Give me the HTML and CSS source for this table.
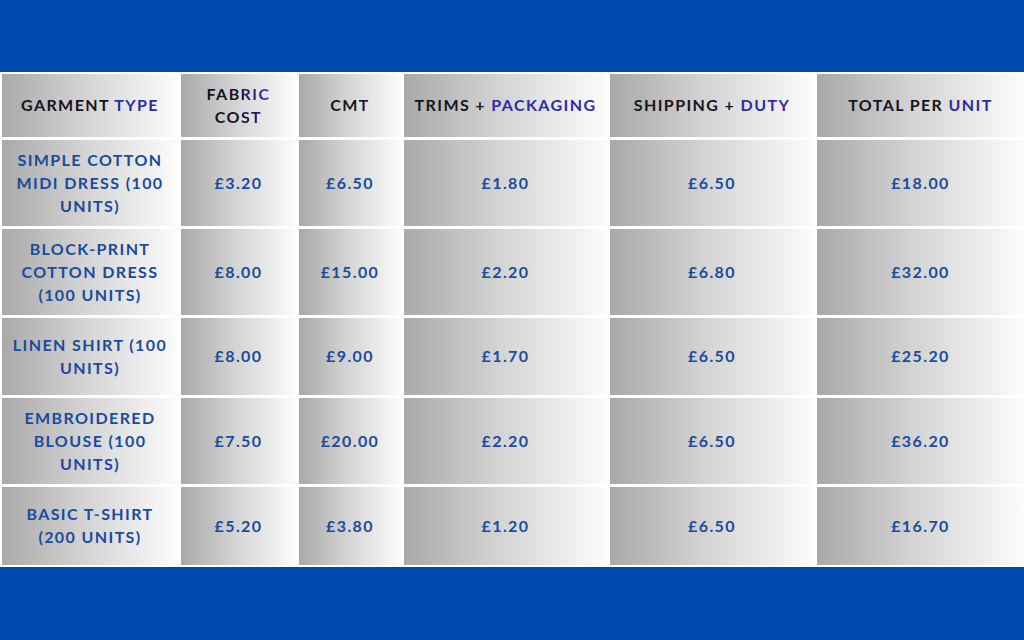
FILE: index.html
```html
<!DOCTYPE html>
<html>
<head>
<meta charset="utf-8">
<link rel="stylesheet" href="styles.css">
</head>
<body>
<div class="band band-top"></div>
<div class="table">
  <div class="cell head"><span><span class="d">GARMENT</span> <span class="b">TYPE</span></span></div>
  <div class="cell head"><span><span class="d">FAB</span><span class="g">RIC</span><br><span class="d">CO</span><span class="g2">ST</span></span></div>
  <div class="cell head"><span><span class="d">CM</span><span class="g2">T</span></span></div>
  <div class="cell head"><span><span class="d">TRIMS +</span> <span class="b">PACKAGING</span></span></div>
  <div class="cell head"><span><span class="d">SHIPPING +</span> <span class="b">DUTY</span></span></div>
  <div class="cell head"><span><span class="d">TOTAL PER</span> <span class="b">UNIT</span></span></div>

  <div class="cell">SIMPLE COTTON<br>MIDI DRESS (100<br>UNITS)</div>
  <div class="cell">£3.20</div>
  <div class="cell">£6.50</div>
  <div class="cell">£1.80</div>
  <div class="cell">£6.50</div>
  <div class="cell">£18.00</div>

  <div class="cell">BLOCK-PRINT<br>COTTON DRESS<br>(100 UNITS)</div>
  <div class="cell">£8.00</div>
  <div class="cell">£15.00</div>
  <div class="cell">£2.20</div>
  <div class="cell">£6.80</div>
  <div class="cell">£32.00</div>

  <div class="cell">LINEN SHIRT (100<br>UNITS)</div>
  <div class="cell">£8.00</div>
  <div class="cell">£9.00</div>
  <div class="cell">£1.70</div>
  <div class="cell">£6.50</div>
  <div class="cell">£25.20</div>

  <div class="cell">EMBROIDERED<br>BLOUSE (100<br>UNITS)</div>
  <div class="cell">£7.50</div>
  <div class="cell">£20.00</div>
  <div class="cell">£2.20</div>
  <div class="cell">£6.50</div>
  <div class="cell">£36.20</div>

  <div class="cell">BASIC T-SHIRT<br>(200 UNITS)</div>
  <div class="cell">£5.20</div>
  <div class="cell">£3.80</div>
  <div class="cell">£1.20</div>
  <div class="cell">£6.50</div>
  <div class="cell">£16.70</div>
</div>
<div class="band band-bottom"></div>
</body>
</html>
```
FILE: styles.css
```css
html, body {
  margin: 0;
  padding: 0;
  background: #ffffff;
  width: 1024px;
  height: 640px;
  overflow: hidden;
  font-family: "Lato", "Liberation Sans", sans-serif;
}

.band {
  background: #004aad;
}
.band-top { height: 72px; }
.band-bottom { height: 73px; }

.table {
  display: grid;
  grid-template-columns: 176px 115px 102px 203px 204px 207px;
  grid-template-rows: 63px 86px 86px 77px 86px 78px;
  gap: 3px;
  padding: 2px 0 2px 2px;
  background: #ffffff;
}

.cell {
  display: flex;
  align-items: center;
  justify-content: center;
  text-align: center;
  padding-bottom: 2px;
  background: linear-gradient(90deg, #a9a9a9 0%, #d2d2d2 45%, #fcfcfc 100%);
  color: #1a4b9c;
  font-weight: 700;
  font-size: 16px;
  letter-spacing: 1.4px;
  line-height: 23px;
}

.d { color: #15151f; }
.b { color: #2c2ca6; }

.g, .g2 {
  background-clip: text;
  -webkit-background-clip: text;
  color: transparent;
}
.g { background-image: linear-gradient(90deg, #1a1a3a 0%, #2c2ca6 70%); }
.g2 { background-image: linear-gradient(90deg, #15151f 0%, #23237a 100%); }
```
